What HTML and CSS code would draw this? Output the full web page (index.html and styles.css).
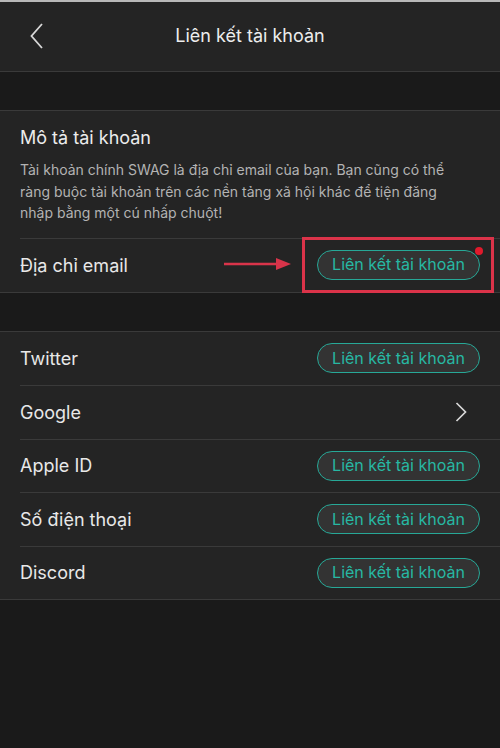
FILE: index.html
```html
<!DOCTYPE html>
<html>
    <head>
        <meta charset="utf-8">
        <title>Liên kết tài khoản</title>
        <link rel="stylesheet" href="styles.css">
    </head>
    <body>
        <div class="topline"></div>
        <header class="navbar">
            <div class="back">
                <svg width="14" height="26" viewBox="0 0 14 26"><path d="M12 1 L1.5 13 L12 25" fill="none" stroke="#d8d8d8" stroke-width="1.8"/></svg>
            </div>
            <div class="title">Liên kết tài khoản</div>
        </header>

        <section class="group">
            <div class="info">
                <div class="info_title">Mô tả tài khoản</div>
                <div class="info_text">Tài khoản chính SWAG là địa chỉ email của bạn. Bạn cũng có thể ràng buộc tài khoản trên các nền tảng xã hội khác để tiện đăng nhập bằng một cú nhấp chuột!</div>
            </div>
            <div class="row row_email">
                <div class="label">Địa chỉ email</div>
                <div class="hint">
                    <svg class="arrow" width="68" height="14" viewBox="0 0 68 14"><path d="M0 7 H54" stroke="#d9344a" stroke-width="2.5"/><path d="M52 1 L67 7 L52 13 Z" fill="#d9344a"/></svg>
                    <div class="hint_box">
                        <div class="link_btn">Liên kết tài khoản<span class="dot"></span></div>
                    </div>
                </div>
            </div>
        </section>

        <section class="group">
            <div class="row">
                <div class="label">Twitter</div>
                <div class="link_btn">Liên kết tài khoản</div>
            </div>
            <div class="row">
                <div class="label">Google</div>
                <svg class="chevron" width="12" height="20" viewBox="0 0 12 20"><path d="M1.5 1 L10.5 10 L1.5 19" fill="none" stroke="#d8d8d8" stroke-width="1.7"/></svg>
            </div>
            <div class="row">
                <div class="label">Apple ID</div>
                <div class="link_btn">Liên kết tài khoản</div>
            </div>
            <div class="row">
                <div class="label">Số điện thoại</div>
                <div class="link_btn">Liên kết tài khoản</div>
            </div>
            <div class="row">
                <div class="label">Discord</div>
                <div class="link_btn">Liên kết tài khoản</div>
            </div>
        </section>
    </body>
</html>
```

FILE: styles.css
```css
* {
    box-sizing: border-box;
}

body {
    margin: 0;
    background-color: #1a1a1a;
    font-family: "Inter", "Roboto", sans-serif;
    color: #e6e6e6;
    height: 748px;
}

.topline {
    height: 2px;
    background-color: #b8b8b8;
}

.navbar {
    display: flex;
    align-items: center;
    height: 70px;
    background-color: #242424;
    border-bottom: 1px solid #3a3a3a;
    position: relative;
}

.back {
    display: flex;
    align-items: center;
    padding-left: 30px;
    margin-top: -1px;
}

.title {
    flex: 1;
    text-align: center;
    font-size: 18px;
    margin-right: 44px;
    margin-top: -2px;
    color: #ededed;
}

.group {
    margin-top: 38px;
    background-color: #242424;
    border-top: 1px solid #3a3a3a;
    border-bottom: 1px solid #3a3a3a;
}

.info {
    padding: 14px 20px 14px 20px;
    margin: 0;
}

.info_title {
    font-size: 18px;
    line-height: 26px;
    color: #ececec;
    margin-bottom: 8px;
}

.info_text {
    font-size: 14px;
    line-height: 21.5px;
    color: #b3b3b3;
    padding-right: 20px;
}

.row {
    display: flex;
    align-items: center;
    justify-content: space-between;
    height: 53.5px;
    margin-left: 20px;
    padding-right: 20px;
    border-top: 1px solid #3a3a3a;
}

.group .row:first-child {
    border-top: none;
}

.label {
    font-size: 18px;
    color: #e8e8e8;
}

.link_btn {
    position: relative;
    font-size: 16px;
    color: #27b8a3;
    border: 1.5px solid #27a897;
    border-radius: 16px;
    background-color: #333;
    height: 30px;
    width: 163px;
    display: flex;
    align-items: center;
    justify-content: center;
    padding-bottom: 1px;
}

.chevron {
    margin-right: 13px;
}

.row_email {
    padding-right: 6px;
    height: 54px;
    align-items: stretch;
}

.row_email .label {
    align-self: center;
}

.hint {
    display: flex;
    align-items: center;
}

.arrow {
    margin-right: 10px;
    margin-top: -3px;
}

.hint_box {
    display: flex;
    align-items: center;
    height: 56px;
    margin-top: -1px;
    border: 3.5px solid #db3349;
    padding: 0 11px 0 12px;
}

.dot {
    position: absolute;
    width: 8px;
    height: 8px;
    border-radius: 50%;
    background-color: #e01a2c;
    top: -4px;
    right: -4px;
}
```
